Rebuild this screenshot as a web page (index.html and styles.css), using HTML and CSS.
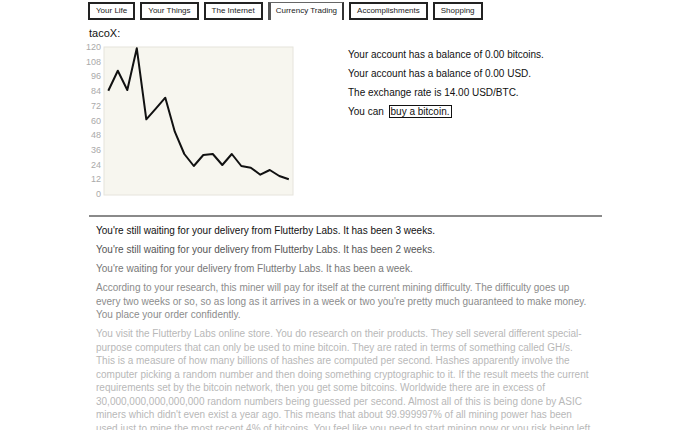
FILE: index.html
```html
<!DOCTYPE html>
<html>
  <head>
    <title>Bitcoin Game</title>
    <link rel="stylesheet" href="styles.css">
  </head>
  <body>
    <div class="page">
      <div class="tabs">
        <div class="tab">Your Life</div>
        <div class="tab">Your Things</div>
        <div class="tab">The Internet</div>
        <div class="tab selected">Currency Trading</div>
        <div class="tab">Accomplishments</div>
        <div class="tab">Shopping</div>
      </div>

      <div class="trading">
        <div class="chart-box">
          <div class="chart-title">tacoX:</div>
          <svg class="chart" width="216" height="162" viewBox="-6 0 216 162">
            <rect x="16" y="7" width="189" height="148" fill="#f7f6ef" stroke="#e6e4dc" stroke-width="1"/>
            <g class="axis" text-anchor="end">
              <text x="13" y="157">0</text>
              <text x="13" y="142.3">12</text>
              <text x="13" y="127.6">24</text>
              <text x="13" y="112.9">36</text>
              <text x="13" y="98.2">48</text>
              <text x="13" y="83.5">60</text>
              <text x="13" y="68.8">72</text>
              <text x="13" y="54.1">84</text>
              <text x="13" y="39.4">96</text>
              <text x="13" y="24.7">108</text>
              <text x="13" y="10">120</text>
            </g>
            <polyline fill="none" stroke="#111" stroke-width="2" stroke-linejoin="round"
              points="20.3,50.7 29.8,30.7 39.3,50 48.8,8.3 58.3,79.3 67.8,68.7 77.3,57.7 86.8,91.7 96.3,114 105.8,126 115.3,115 124.8,114 134.3,125 143.8,114 153.3,126 162.8,127.7 172.3,134.7 181.8,130 191.3,136 200.8,139.3"/>
          </svg>
        </div>

        <div class="account">
          <div class="line">Your account has a balance of 0.00 bitcoins.</div>
          <div class="line">Your account has a balance of 0.00 USD.</div>
          <div class="line">The exchange rate is 14.00 USD/BTC.</div>
          <div class="line">You can <button type="button" class="buy">buy a bitcoin.</button></div>
        </div>
      </div>

      <hr class="divider">

      <div class="log">
        <div class="msg age0">You're still waiting for your delivery from Flutterby Labs. It has been 3 weeks.</div>
        <div class="msg age1">You're still waiting for your delivery from Flutterby Labs. It has been 2 weeks.</div>
        <div class="msg age2">You're waiting for your delivery from Flutterby Labs. It has been a week.</div>
        <div class="msg age3">According to your research, this miner will pay for itself at the current mining difficulty. The difficulty goes up every two weeks or so, so as long as it arrives in a week or two you're pretty much guaranteed to make money. You place your order confidently.</div>
        <div class="msg age4">You visit the Flutterby Labs online store. You do research on their products. They sell several different special-purpose computers that can only be used to mine bitcoin. They are rated in terms of something called GH/s. This is a measure of how many billions of hashes are computed per second. Hashes apparently involve the computer picking a random number and then doing something cryptographic to it. If the result meets the current requirements set by the bitcoin network, then you get some bitcoins. Worldwide there are in excess of 30,000,000,000,000,000 random numbers being guessed per second. Almost all of this is being done by ASIC miners which didn't even exist a year ago. This means that about 99.999997% of all mining power has been used just to mine the most recent 4% of bitcoins. You feel like you need to start mining now or you risk being left behind.</div>
      </div>
    </div>
  </body>
</html>
```

FILE: styles.css
```css
body {
  margin: 0;
  background: #ffffff;
  font-family: "Liberation Sans", Arial, sans-serif;
  color: #111111;
}
.page {
  width: 514px;
  margin: 0 auto;
  padding-top: 2px;
}
.tabs {
  display: flex;
  gap: 5px;
  height: 19px;
}
.tab {
  height: 14px;
  padding: 0 6px;
  border: 2px solid #222222;
  font-size: 8px;
  line-height: 14px;
  color: #222222;
  white-space: nowrap;
}
.tab.selected {
  height: 17px;
  border: 1px solid #666666;
  border-left: 3px solid #555555;
  border-right: 2px solid #333333;
  border-bottom: none;
  padding: 0 5px;
  line-height: 16px;
}
.trading {
  display: flex;
  gap: 50px;
}
.chart-title {
  font-size: 11px;
  line-height: 14px;
  padding: 5px 0 0 1px;
}
.chart {
  display: block;
  margin-left: -6px;
}
.axis text {
  font-size: 9px;
  fill: #aaaaaa;
}
.account {
  padding-top: 27px;
  font-size: 10px;
}
.line {
  height: 19px;
  line-height: 14px;
}
.buy {
  font: inherit;
  color: #111111;
  background: #ffffff;
  border: 1px solid #111111;
  padding: 0 1px;
  margin-left: 2px;
  height: 13px;
  line-height: 11px;
}
.divider {
  margin: 13px 0 7px 1px;
  border: none;
  border-top: 2px solid #8a8a8a;
}
.log {
  padding: 0 8px 0 8px;
  font-size: 10px;
}
.msg {
  line-height: 13.5px;
  margin-bottom: 5.5px;
}
.age0 { color: #111111; }
.age1 { color: #555555; }
.age2 { color: #777777; }
.age3 { color: #8c8c8c; }
.age4 { color: #b8b8b8; }
```
